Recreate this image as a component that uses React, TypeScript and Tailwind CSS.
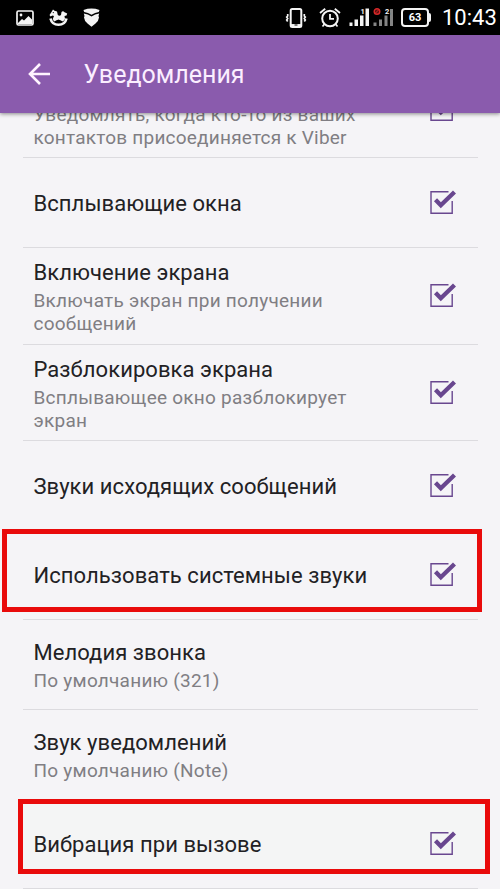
import React from 'react';

type Setting = {
  title: string;
  note?: string[];
  height: string;
  checkbox?: boolean;
  highlight?: string;
};

const settings: Setting[] = [
  { title: 'Всплывающие окна', height: 'h-[90px]', checkbox: true },
  {
    title: 'Включение экрана',
    note: ['Включать экран при получении', 'сообщений'],
    height: 'h-[97px]',
    checkbox: true,
  },
  {
    title: 'Разблокировка экрана',
    note: ['Всплывающее окно разблокирует', 'экран'],
    height: 'h-[96px]',
    checkbox: true,
  },
  { title: 'Звуки исходящих сообщений', height: 'h-[90px]', checkbox: true },
  {
    title: 'Использовать системные звуки',
    height: 'h-[89px]',
    checkbox: true,
    highlight: '-left-[21px] -top-[2px] h-[83px] w-[480px]',
  },
  { title: 'Мелодия звонка', note: ['По умолчанию (321)'], height: 'h-[90px]' },
  { title: 'Звук уведомлений', note: ['По умолчанию (Note)'], height: 'h-[90px]' },
  {
    title: 'Вибрация при вызове',
    height: 'h-[89px]',
    checkbox: true,
    highlight: '-left-[5px] -top-[1px] h-[75px] w-[472px] bg-[#f4f5f5]',
  },
];

function Checkbox() {
  return (
    <svg width="28" height="26" viewBox="0 0 28 26" fill="none" stroke="#69478f" className="shrink-0">
      <path d="M19.500 2.700H2v21.600h21.200V12" strokeWidth="1.400" />
      <path d="M6.500 10.800l5.300 5.500L25.500 3" strokeWidth="4.300" />
    </svg>
  );
}

function StatusBar() {
  return (
    <div className="flex h-[35px] shrink-0 items-center justify-between bg-black pl-4 pr-[3px] text-white">
      <div className="flex items-center gap-[15px]">
        <svg width="18" height="16" viewBox="0 0 18 16">
          <rect x="1" y="1" width="16" height="14" rx="1.500" fill="none" stroke="#f4f4f4" strokeWidth="1.700" />
          <circle cx="5" cy="5" r="1.400" fill="#f4f4f4" />
          <path d="M2 13l4-4 2 1.500L12.500 6 16 9.500V14H2z" fill="#f4f4f4" />
        </svg>
        <svg width="19" height="18" viewBox="0 0 19 18" fill="#f4f4f4">
          <path d="M4 .5L5.500 1.800 8 2.500 8.800 6Q10.500 7.600 12 6L12.500 3Q14 1.200 15.500 3.200L18.200 4.500 17.500 6.500 15.500 7 16 10 14 12.500 9.500 10.500 5 12.500 3.800 10 5 7 3.500 6.500 1.500 7.500.5 6 2.500 3z" />
          <path d="M1.500 9.500Q3 15.800 9.500 15.800T17.500 9.500" fill="none" stroke="#f4f4f4" strokeWidth="2.600" />
          <path d="M6.300 12.500Q9.500 9.800 12.700 12.500 9.500 14.800 6.300 12.500z" fill="#000" />
          <circle cx="4.300" cy="3.600" r=".6" fill="#000" />
        </svg>
        <svg width="17" height="19" viewBox="0 0 17 19" fill="#f4f4f4">
          <path d="M.5 2Q8.500-.8 16.500 2L15.800 4Q12 4.500 8.500 6.800 5 4.500 1.200 4z" />
          <path d="M.8 5.500Q5 6 8.500 8.600 12 6 16.200 5.500L15.500 8 16 9.500Q15.500 13.500 12.500 15.500L8.500 18.700 4.500 15.500Q1.500 13.500 1 9.500L1.500 8z" />
        </svg>
      </div>
      <div className="flex items-center">
        <svg width="24" height="22" viewBox="0 0 24 22" fill="none" stroke="#f4f4f4">
          <rect x="6.700" y="2" width="10.600" height="18" rx="1.500" strokeWidth="2" />
          <path d="M6.500 18.300h11" strokeWidth="2.500" />
          <path d="M10.500 18h3" stroke="#000" />
          <path d="M3.700 7v2l-1 1 1 1.500-1 1.500 1 1.500M20.300 7v2l1 1-1 1.500 1 1.500-1 1.500" strokeWidth="1.700" />
        </svg>
        <svg width="22" height="22" viewBox="0 0 22 22" fill="none" stroke="#f4f4f4" className="ml-[11px]">
          <circle cx="11" cy="11.500" r="7.800" strokeWidth="2" />
          <path d="M11 7V11.800h4" strokeWidth="1.800" />
          <path d="M1 6l5.200-4.300M21 6l-5.200-4.300" strokeWidth="1.800" />
          <path d="M5.500 17l-2 2.500M16.500 17l2 2.500" strokeWidth="1.700" />
        </svg>
        <svg width="48" height="22" viewBox="0 0 48 22" className="ml-[7px]">
          <path d="M1.500 15.500h3V19h-3zM6.500 12.500H10V19H6.500zM12 8.500h3.500V19H12zM17.500 1.500H21V19h-3.500z" fill="#f4f4f4" />
          <path d="M25.500 15.500h3V19h-3zM31 12.500h3V19h-3zM36.500 8.500h3V19h-3zM42 2h3v17h-3z" fill="#858585" />
          <circle cx="29" cy="4.500" r="2.800" fill="#5b1010" stroke="#d62828" strokeWidth="1.400" />
          <path d="M27 6.500l4-4" stroke="#d62828" />
          <text x="12.500" y="6.500" fontSize="7.500" fontWeight="700" fill="#f4f4f4">1</text>
          <text x="37" y="6.500" fontSize="7.500" fontWeight="700" fill="#f4f4f4" stroke="#000" strokeWidth="1.500" paintOrder="stroke">
            2
          </text>
        </svg>
        <div className="ml-[5px] flex items-center">
          <span className="flex h-[19px] w-[28px] items-center justify-center rounded-[4px] border-2 border-[#f4f4f4] text-[11px] font-bold leading-none">
            63
          </span>
          <span className="h-[9px] w-[2px] rounded-r-sm bg-[#f4f4f4]" />
        </div>
        <span className="ml-[11px] w-[55px] whitespace-nowrap text-[22px] leading-none">10:43</span>
      </div>
    </div>
  );
}

function SettingRow({ title, note, height, checkbox, highlight }: Setting) {
  return (
    <div className={`relative flex shrink-0 items-center justify-between border-b border-[#dcdbdf] pl-[10.5px] pr-[21px] ${height}`}>
      {highlight && <div className={`absolute border-[5px] border-[#e90b0b] ${highlight}`} />}
      <div className="relative whitespace-nowrap pt-[2px]">
        <div className="text-[22px] leading-[28px] tracking-[0.06px] text-[#222124]">{title}</div>
        {note && (
          <div className="mt-[2px] text-[19px] leading-[23px] tracking-[0.24px] text-[#807e83]">
            {note.map((line) => (
              <div key={line}>{line}</div>
            ))}
          </div>
        )}
      </div>
      {checkbox && (
        <div className="relative pb-[2px]">
          <Checkbox />
        </div>
      )}
    </div>
  );
}

export default function App() {
  return (
    <div className="flex h-[889px] w-[500px] flex-col overflow-hidden bg-[#f5f4f7] font-[Roboto,sans-serif]">
      <StatusBar />
      <header className="relative z-10 flex h-[78px] shrink-0 items-center bg-[#8a5bad] pl-[28px] shadow-[0_1px_4px_rgba(0,0,0,0.45)]">
        <svg width="23" height="22" viewBox="0 0 23 22" fill="none" stroke="#fff4ff" strokeWidth="2.600">
          <path d="M22 11H2M12 1L2 11l10 10" />
        </svg>
        <h1 className="ml-[32.5px] pt-[2px] text-[25px] leading-[30px] text-[#fbeeff]">Уведомления</h1>
      </header>
      <main className="flex flex-1 flex-col overflow-hidden pl-[23px] pr-[22px]">
        <div className="flex h-[45px] shrink-0 items-end justify-between border-b border-[#dcdbdf] pl-[10.5px] pr-[21px]">
          <div className="whitespace-nowrap pb-[8px] text-[19px] leading-[23px] tracking-[0.22px] text-[#807e83]">
            <div>Уведомлять, когда кто-то из ваших</div>
            <div>контактов присоединяется к Viber</div>
          </div>
          <div className="pb-[35px]">
            <Checkbox />
          </div>
        </div>
        {settings.map((setting) => (
          <SettingRow key={setting.title} {...setting} />
        ))}
      </main>
    </div>
  );
}
